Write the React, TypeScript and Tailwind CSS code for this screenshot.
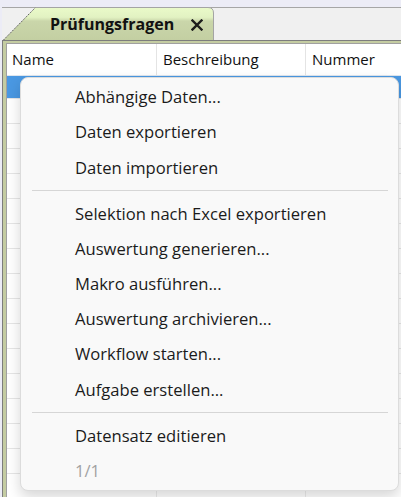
import React from "react";

type MenuEntry = { label: string; disabled?: boolean } | "sep";

const menu: MenuEntry[] = [
  { label: "Abhängige Daten..." },
  { label: "Daten exportieren" },
  { label: "Daten importieren" },
  "sep",
  { label: "Selektion nach Excel exportieren" },
  { label: "Auswertung generieren..." },
  { label: "Makro ausführen..." },
  { label: "Auswertung archivieren..." },
  { label: "Workflow starten..." },
  { label: "Aufgabe erstellen..." },
  "sep",
  { label: "Datensatz editieren" },
  { label: "1/1", disabled: true },
];

function TabShape() {
  return (
    <svg className="absolute inset-0" width="212" height="33" viewBox="0 0 212 33">
      <defs>
        <linearGradient id="tabFill" x1="0" y1="0" x2="0" y2="1">
          <stop offset="0" stopColor="#eafac9" />
          <stop offset="0.3" stopColor="#e2f2c2" />
          <stop offset="0.42" stopColor="#cad6aa" />
          <stop offset="1" stopColor="#c3cfa2" />
        </linearGradient>
      </defs>
      <path d="M1.5 33 L33.5 0.5 H206 Q211.5 0.5 211.5 6 V33 Z" fill="url(#tabFill)" />
      <path d="M1.5 33 L33.5 0.5" stroke="#5a5a5a" strokeWidth="1" strokeDasharray="1.5 1" fill="none" />
      <path d="M33.5 0.5 H206 Q211.5 0.5 211.5 6 V33" stroke="#a4a4a4" strokeWidth="1" fill="none" />
    </svg>
  );
}

function CloseGlyph() {
  return (
    <svg width="12" height="12" viewBox="0 0 12 12">
      <path d="M1.5 1.5 L10.5 10.5 M10.5 1.5 L1.5 10.5" stroke="#1c1c1c" strokeWidth="2.4" strokeLinecap="square" />
    </svg>
  );
}

function ContextMenu() {
  return (
    <div className="absolute left-[20px] top-[77px] w-[379px] rounded-[8px] border border-[#dcdcdc] bg-[#f9f9f9] pt-[2px] pb-[1px] shadow-[0_6px_14px_rgba(0,0,0,0.16)]">
      {menu.map((m, i) =>
        m === "sep" ? (
          <div key={i} className="pt-[4px] pb-[6px] pl-[11px] pr-[10px]">
            <div className="h-px bg-[#d6d6d6]" />
          </div>
        ) : (
          <div
            key={i}
            className={
              "flex h-[35.2px] items-center pl-[54px] text-[16.6px] " +
              (m.disabled ? "text-[#a2a2a2]" : "text-[#1b1b1b]")
            }
          >
            {m.label}
          </div>
        )
      )}
    </div>
  );
}

export default function App() {
  const rows = Array.from({ length: 17 });
  return (
    <div
      className="relative h-[497px] w-[401px] overflow-hidden bg-[#ececf6] pl-[2px] pt-[7px]"
      style={{ fontFamily: '"Open Sans", "Noto Sans", sans-serif' }}
    >
      <div className="flex h-full flex-col bg-[#f0f0f0]">
        {/* tab strip */}
        <div className="flex h-[33px] items-end border-t border-[#a6a6a6]">
          <div className="relative h-[33px] w-[212px]">
            <TabShape />
            <div className="relative flex h-full items-center pl-[48px] pt-[1px]">
              <span className="text-[16px] font-bold text-[#111]">Prüfungsfragen</span>
              <span className="ml-[17px] mt-[1px]">
                <CloseGlyph />
              </span>
            </div>
          </div>
        </div>

        {/* active tab frame */}
        <div className="flex flex-1 flex-col border-l border-t border-[#7d7d7d] bg-[#c4cca2] pl-[3px] pt-[2px]">
          <div className="flex-1 border-l border-t border-[#a0a0a0] bg-white">
            <div className="flex h-[32px] items-center border-b border-[#dfe6ee] text-[15px] text-[#111]">
              <div className="flex h-full w-[150px] items-center border-r border-[#e4e4e4] pl-[5px]">Name</div>
              <div className="flex h-full w-[149px] items-center border-r border-[#e4e4e4] pl-[6px]">Beschreibung</div>
              <div className="flex h-full flex-1 items-center pl-[6px]">Nummer</div>
            </div>
            <div className="h-[23px] border-b border-[#e6e6e6] bg-[#4a98e2]" />
            {rows.map((_, i) => (
              <div key={i} className="flex h-[25px] border-b border-[#e6e6e6]">
                <div className="w-[150px] border-r border-[#ececec]" />
                <div className="w-[149px] border-r border-[#ececec]" />
                <div className="flex-1" />
              </div>
            ))}
          </div>
        </div>
      </div>
      <ContextMenu />
    </div>
  );
}
